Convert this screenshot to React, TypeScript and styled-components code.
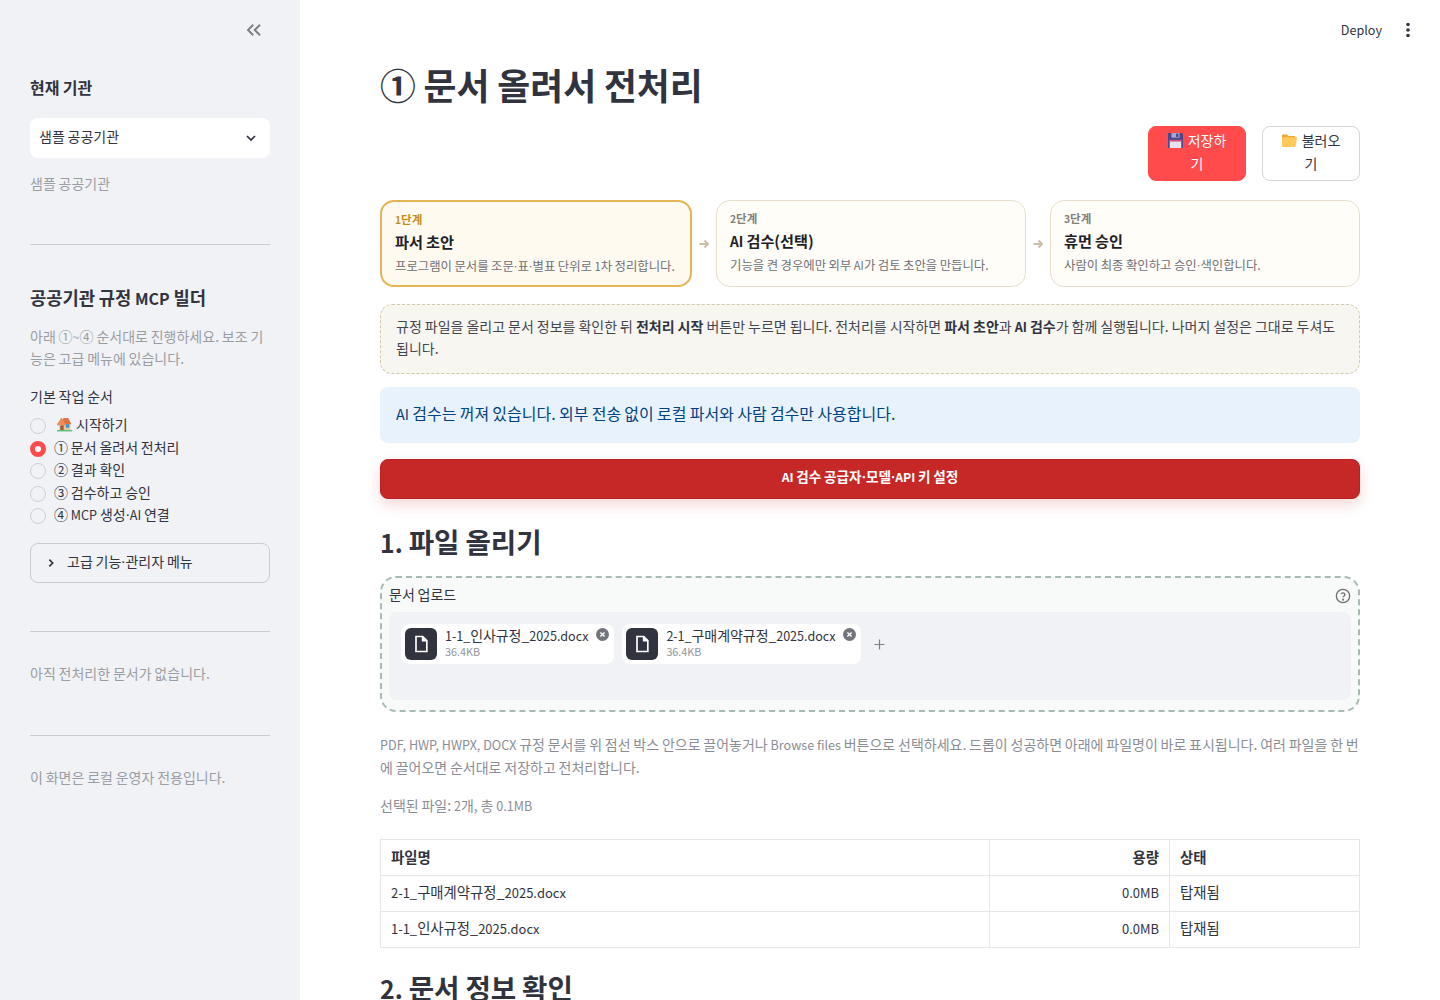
import React from "react";
import styled, { createGlobalStyle } from "styled-components";

const Global = createGlobalStyle`
  html, body { margin: 0; padding: 0; height: 100%; overflow: hidden; background: #fff; }
  body { font-family: "Noto Sans CJK KR", "Noto Sans", sans-serif; color: #31333f; word-spacing: -0.02em; }
  * { box-sizing: border-box; }
`;
const Latin = styled.span`font-size: 0.9em; line-height: 1;`;
const Dot = styled.span`font-size: 0.9em; line-height: 1; margin: 0 -0.12em;`;
const T = ({ children }: { children: string }) => (
  <>
    {children.split(/([A-Za-z0-9~][A-Za-z0-9_.,:\-]*|·)/).map((part, i) =>
      i % 2 === 0 ? part : part === "·" ? <Dot key={i}>·</Dot> : <Latin key={i}>{part}</Latin>
    )}
  </>
);

const Shell = styled.div`display: flex; width: 1440px; height: 1000px; overflow: hidden;`;
const Sidebar = styled.aside`width: 300px; flex: none; background: #f0f2f6; padding: 0 30px; display: flex; flex-direction: column;`;
const CollapseRow = styled.div`height: 60px; display: flex; align-items: center; justify-content: flex-end; padding-right: 7px; color: #7d7f88;`;
const SideTitle = styled.div`margin-top: 16px; font-size: 16px; font-weight: 700; line-height: 22px; height: 22px;`;
const Select = styled.div`margin-top: 20px; height: 40px; background: #fff; border-radius: 8px; display: flex; align-items: center; justify-content: space-between; padding: 0 11px 5px 9px; font-size: 14px; line-height: 20px;
  svg { margin-top: 5px; }`;
const Muted = styled.div<{ $top: number }>`margin-top: ${p => p.$top}px; font-size: 14px; line-height: 22px; color: #9b9da5;`;
const Rule = styled.hr<{ $top: number }>`margin: ${p => p.$top}px 0 0; border: 0; height: 1px; background: #c9cbd1; flex: none;`;
const SideHeading = styled.div`margin-top: 39px; font-size: 17.7px; font-weight: 700; line-height: 26px;`;
const RadioLabel = styled.div`margin-top: 17px; font-size: 14px; line-height: 20px;`;
const RadioList = styled.div`margin-top: 7px; display: flex; flex-direction: column;`;
const RadioRow = styled.div`height: 22.5px; display: flex; align-items: center; gap: 8px; font-size: 14px; line-height: 20px; white-space: nowrap;`;
const RadioDot = styled.span<{ $on?: boolean }>`width: 16px; height: 16px; flex: none; border-radius: 50%; margin-top: 4px; background: ${p => p.$on ? "#ff4b4b" : "#f0f2f6"}; border: ${p => p.$on ? "5px solid #ff4b4b" : "1px solid #cdcfd4"}; position: relative;
  &::after { content: ""; display: ${p => p.$on ? "block" : "none"}; position: absolute; inset: 0; margin: auto; width: 6px; height: 6px; border-radius: 50%; background: #fff; }`;
const HomeLabel = styled.span`display: flex; align-items: center; gap: 4px; margin-left: 3px;`;
const Expander = styled.div`margin-top: 17px; height: 40px; border: 1px solid #c9cbd1; border-radius: 8px; display: flex; align-items: center; gap: 11px; padding: 0 15px 3px; font-size: 14px; color: #31333f;
  svg { margin-top: 3px; }`;

const Main = styled.main`flex: 1; position: relative; padding: 0 80px; overflow: hidden;`;
const TopBar = styled.div`position: absolute; top: 0; right: 0; height: 60px; display: flex; align-items: center; gap: 22px; padding-right: 28px; font-size: 14px;
  > span { margin-top: -2px; }`;
const Title = styled.h1`margin: 58px 0 0; font-size: 35.8px; line-height: 52px; font-weight: 700; letter-spacing: 0;`;
const ActionRow = styled.div`margin-top: 16px; display: flex; justify-content: flex-end; gap: 16px;`;
const ActionButton = styled.div<{ $primary?: boolean }>`width: 98px; height: 55px; border-radius: 8px; padding: 2px 16px; text-align: center; font-size: 14px; line-height: 23px; background: ${p => p.$primary ? "#ff4b4b" : "#fff"}; color: ${p => p.$primary ? "#fff" : "#31333f"}; border: 1px solid ${p => p.$primary ? "#ff4b4b" : "#d5d6da"};
  svg { vertical-align: -2px; margin-right: 5px; }`;
const Flow = styled.div`margin-top: 19px; display: grid; grid-template-columns: 312px 24px 310px 24px 310px; height: 87px;`;
const StepCard = styled.div<{ $active?: boolean }>`border-radius: 14px; background: ${p => p.$active ? "#fffaf0" : "#fffdf8"}; border: ${p => p.$active ? "2px solid #e5b454" : "1px solid #e8dfca"}; padding: 9px 13px;`;
const StepNo = styled.div<{ $active?: boolean }>`font-size: 11.5px; line-height: 16px; font-weight: 700; color: ${p => p.$active ? "#c28e1e" : "#84807a"};`;
const StepName = styled.div`margin-top: 3px; font-size: 15.2px; line-height: 22px; font-weight: 700; color: #1f2128;`;
const StepDesc = styled.div`margin-top: 5px; font-size: 12.4px; line-height: 18px; color: #6f7076; white-space: nowrap;`;
const ArrowCell = styled.div`display: flex; align-items: center; justify-content: center; color: #c9bfa8; font-size: 12px;`;
const Note = styled.div`margin-top: 17px; height: 70px; background: #f7f6f1; border: 1px dashed #d3c9a8; border-radius: 12px; padding: 10px 15px; font-size: 14px; line-height: 22px; color: #44464f; word-spacing: -0.01em;
  strong { font-weight: 700; color: #31333f; }`;
const Info = styled.div`margin-top: 13px; height: 56px; background: #e8f2fc; border-radius: 8px; padding: 0 16px 4px; display: flex; align-items: center; font-size: 16px; color: #004280;`;
const Wide = styled.div`margin-top: 16px; height: 40px; background: #c62828; border: 1px solid #b92222; border-radius: 8px; padding-bottom: 6px; display: flex; align-items: center; justify-content: center; color: #fff; font-size: 13.6px; font-weight: 700; box-shadow: 0 6px 14px rgba(198,40,40,.18);`;
const H2 = styled.h2<{ $top: number }>`margin: ${p => p.$top}px 0 0; font-size: 27.6px; line-height: 40px; font-weight: 600; white-space: nowrap;`;
const Upload = styled.div`margin-top: 15px; height: 136px; border: 2px dashed #a7bbb0; border-radius: 16px; background: #f7faf8; padding: 0 7px;`;
const UploadHead = styled.div`height: 34px; display: flex; justify-content: space-between; align-items: center; padding-bottom: 2px; font-size: 14px; color: #31333f;
  svg { margin-top: 4px; }`;
const Drop = styled.div`height: 88px; background: #f0f2f6; border-radius: 8px; padding: 12px 12px; display: flex; align-items: flex-start; gap: 8px;`;
const Chip = styled.div`height: 40px; background: #fff; border-radius: 8px; padding: 4px 26px 4px 4px; display: flex; gap: 8px; position: relative;`;
const ChipIcon = styled.div`width: 32px; height: 32px; border-radius: 6px; background: #31333f; display: flex; align-items: center; justify-content: center; flex: none;`;
const ChipName = styled.div`font-size: 14px; line-height: 18px; white-space: nowrap; margin-top: -2px; letter-spacing: -0.06px;`;
const ChipSize = styled.div`font-size: 12px; line-height: 14px; color: #92949c;`;
const ChipClose = styled.div`position: absolute; top: 4px; right: 5px; width: 13px; height: 13px; line-height: 0;`;
const Plus = styled.div`height: 40px; display: flex; align-items: center; margin-left: 3px; color: #7d7f88; padding-left: 2px;`;
const Help = styled.p`margin: 21px 0 0; font-size: 14px; line-height: 23px; color: #8b8d95; word-spacing: -0.025em;`;
const Selected = styled.p`margin: 16px 0 0; font-size: 14px; line-height: 20px; color: #8b8d95;`;
const Table = styled.table`margin-top: 24px; width: 980px; border-collapse: separate; border-spacing: 0; table-layout: fixed; font-size: 14.4px; border-top: 1px solid #e6e6e8; border-left: 1px solid #e6e6e8;
  th, td { border-right: 1px solid #e6e6e8; border-bottom: 1px solid #e6e6e8; height: 36px; padding: 0 10px 4px; font-weight: 400; text-align: left; }
  th { font-weight: 700; padding-bottom: 3px; }
  th.r, td.r { text-align: right; }`;

const Chevrons = () => (
  <svg width="18" height="18" viewBox="0 0 24 24" fill="none" stroke="currentColor" strokeWidth="2.6"><path d="M11 5l-7 7 7 7M20 5l-7 7 7 7" /></svg>
);
const Down = () => (
  <svg width="16" height="16" viewBox="0 0 24 24" fill="none" stroke="#31333f" strokeWidth="2.6"><path d="M6 9l6 6 6-6" /></svg>
);
const Right = () => (
  <svg width="10" height="10" viewBox="0 0 24 24" fill="none" stroke="#31333f" strokeWidth="4"><path d="M8 4l8 8-8 8" /></svg>
);
const Kebab = () => (
  <svg width="8" height="16" viewBox="0 0 8 16" fill="#31333f"><circle cx="4" cy="2.5" r="1.8" /><circle cx="4" cy="8" r="1.8" /><circle cx="4" cy="13.5" r="1.8" /></svg>
);
const Arrow = () => (
  <svg width="12" height="12" viewBox="0 0 24 24" fill="none" stroke="currentColor" strokeWidth="4"><path d="M3 12h17M13 5l7 7-7 7" /></svg>
);
const DocIcon = () => (
  <svg width="20" height="20" viewBox="0 0 24 24" fill="#fff"><path fillRule="evenodd" d="M5 2h9.5L20 7.5V22H5zM7 4v16h11V9h-5V4z" /></svg>
);
const CloseIcon = () => (
  <svg width="13" height="13" viewBox="0 0 13 13"><circle cx="6.5" cy="6.5" r="6.5" fill="#73757d" /><path d="M4.4 4.4l4.2 4.2M8.6 4.4l-4.2 4.2" stroke="#fff" strokeWidth="1.4" /></svg>
);
const HelpIcon = () => (
  <svg width="16" height="16" viewBox="0 0 24 24" fill="none" stroke="#6f7076" strokeWidth="2"><circle cx="12" cy="12" r="10" /><path d="M9.2 9a3 3 0 0 1 5.7 1c0 2-2.9 2.6-2.9 4" /><circle cx="12" cy="17.5" r=".6" fill="#6f7076" /></svg>
);
const PlusIcon = () => (
  <svg width="11" height="11" viewBox="0 0 11 11" stroke="currentColor" strokeWidth="1.2"><path d="M5.5 0.5v10M0.5 5.5h10" /></svg>
);
const Floppy = () => (
  <svg width="15" height="15" viewBox="1 1 13 13" aria-label="💾">
    <path d="M1 1h12l1 1v12H1z" fill="#4a4790" />
    <rect x="4" y="1" width="7" height="4" fill="#a9a8c9" />
    <rect x="8" y="1.6" width="2" height="2.8" fill="#4a4790" />
    <rect x="2.5" y="7" width="10" height="7" fill="#e6e2ee" />
    <rect x="2.5" y="7" width="10" height="1.4" fill="#d8487a" />
  </svg>
);
const Folder = () => (
  <svg width="15" height="15" viewBox="1 1.5 13.5 13" aria-label="📁">
    <path d="M1 3.5A1 1 0 0 1 2 2.5h3.5l1.5 1.5h5a1 1 0 0 1 1 1v1H1z" fill="#f3a92f" />
    <path d="M1 13V6a1 1 0 0 1 1-1h11.5a1 1 0 0 1 1 1l-1.3 7a1 1 0 0 1-1 .8H2a1 1 0 0 1-1-.8z" fill="#ffc95c" />
  </svg>
);
const House = () => (
  <svg width="15" height="15" viewBox="1 2 13.5 12.5" aria-label="🏠">
    <rect x="3" y="6" width="10" height="7.5" fill="#e8c49a" />
    <path d="M2.5 8L7 2.5h4L14 8z" fill="#df6f45" />
    <path d="M1 8l4-6 4 6v1H1z" fill="#ee8c5a" />
    <rect x="9" y="8" width="3" height="3" fill="#3f8fc9" />
    <rect x="4" y="9" width="3" height="4.5" fill="#a85a38" />
    <rect x="1" y="13.2" width="13.5" height="1.3" fill="#58c27d" />
  </svg>
);

export default function App() {
  return (
    <Shell>
      <Global />
      <Sidebar>
        <CollapseRow><Chevrons /></CollapseRow>
        <SideTitle>현재 기관</SideTitle>
        <Select>샘플 공공기관<Down /></Select>
        <Muted $top={14}>샘플 공공기관</Muted>
        <Rule $top={50} />
        <SideHeading><T>공공기관 규정 MCP 빌더</T></SideHeading>
        <Muted $top={15}><T>아래 ①~④ 순서대로 진행하세요. 보조 기능은 고급 메뉴에 있습니다.</T></Muted>
        <RadioLabel>기본 작업 순서</RadioLabel>
        <RadioList>
          <RadioRow><RadioDot /><HomeLabel><House />시작하기</HomeLabel></RadioRow>
          <RadioRow><RadioDot $on />① 문서 올려서 전처리</RadioRow>
          <RadioRow><RadioDot />② 결과 확인</RadioRow>
          <RadioRow><RadioDot />③ 검수하고 승인</RadioRow>
          <RadioRow><RadioDot /><span><T>④ MCP 생성·AI 연결</T></span></RadioRow>
        </RadioList>
        <Expander><Right /><span><T>고급 기능·관리자 메뉴</T></span></Expander>
        <Rule $top={48} />
        <Muted $top={30}>아직 전처리한 문서가 없습니다.</Muted>
        <Rule $top={51} />
        <Muted $top={30}>이 화면은 로컬 운영자 전용입니다.</Muted>
      </Sidebar>
      <Main>
        <TopBar><span><T>Deploy</T></span><Kebab /></TopBar>
        <Title>① 문서 올려서 전처리</Title>
        <ActionRow>
          <ActionButton $primary><Floppy />저장하기</ActionButton>
          <ActionButton><Folder />불러오기</ActionButton>
        </ActionRow>
        <Flow>
          <StepCard $active>
            <StepNo $active><T>1단계</T></StepNo>
            <StepName>파서 초안</StepName>
            <StepDesc><T>프로그램이 문서를 조문·표·별표 단위로 1차 정리합니다.</T></StepDesc>
          </StepCard>
          <ArrowCell><Arrow /></ArrowCell>
          <StepCard>
            <StepNo><T>2단계</T></StepNo>
            <StepName><T>AI 검수(선택)</T></StepName>
            <StepDesc><T>기능을 켠 경우에만 외부 AI가 검토 초안을 만듭니다.</T></StepDesc>
          </StepCard>
          <ArrowCell><Arrow /></ArrowCell>
          <StepCard>
            <StepNo><T>3단계</T></StepNo>
            <StepName>휴먼 승인</StepName>
            <StepDesc><T>사람이 최종 확인하고 승인·색인합니다.</T></StepDesc>
          </StepCard>
        </Flow>
        <Note>규정 파일을 올리고 문서 정보를 확인한 뒤 <strong>전처리 시작</strong> 버튼만 누르면 됩니다. 전처리를 시작하면 <strong>파서 초안</strong>과 <strong><T>AI 검수</T></strong>가 함께 실행됩니다. 나머지 설정은 그대로 두셔도 됩니다.</Note>
        <Info><span><T>AI 검수는 꺼져 있습니다. 외부 전송 없이 로컬 파서와 사람 검수만 사용합니다.</T></span></Info>
        <Wide><span><T>AI 검수 공급자·모델·API 키 설정</T></span></Wide>
        <H2 $top={22}><T>1. 파일 올리기</T></H2>
        <Upload>
          <UploadHead>문서 업로드<HelpIcon /></UploadHead>
          <Drop>
            <Chip>
              <ChipIcon><DocIcon /></ChipIcon>
              <div><ChipName><T>1-1_인사규정_2025.docx</T></ChipName><ChipSize><T>36.4KB</T></ChipSize></div>
              <ChipClose><CloseIcon /></ChipClose>
            </Chip>
            <Chip>
              <ChipIcon><DocIcon /></ChipIcon>
              <div><ChipName><T>2-1_구매계약규정_2025.docx</T></ChipName><ChipSize><T>36.4KB</T></ChipSize></div>
              <ChipClose><CloseIcon /></ChipClose>
            </Chip>
            <Plus><PlusIcon /></Plus>
          </Drop>
        </Upload>
        <Help><T>PDF, HWP, HWPX, DOCX 규정 문서를 위 점선 박스 안으로 끌어놓거나 Browse files 버튼으로 선택하세요. 드롭이 성공하면 아래에 파일명이 바로 표시됩니다. 여러 파일을 한 번에 끌어오면 순서대로 저장하고 전처리합니다.</T></Help>
        <Selected><T>선택된 파일: 2개, 총 0.1MB</T></Selected>
        <Table>
          <colgroup><col style={{ width: 609 }} /><col style={{ width: 180 }} /><col style={{ width: 190 }} /></colgroup>
          <thead><tr><th>파일명</th><th className="r">용량</th><th>상태</th></tr></thead>
          <tbody>
            <tr><td><T>2-1_구매계약규정_2025.docx</T></td><td className="r"><T>0.0MB</T></td><td>탑재됨</td></tr>
            <tr><td><T>1-1_인사규정_2025.docx</T></td><td className="r"><T>0.0MB</T></td><td>탑재됨</td></tr>
          </tbody>
        </Table>
        <H2 $top={19}><T>2. 문서 정보 확인</T></H2>
      </Main>
    </Shell>
  );
}
